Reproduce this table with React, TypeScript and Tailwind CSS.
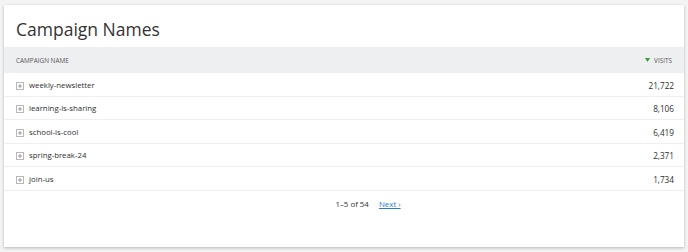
const rows = [
  { name: 'weekly-newsletter', visits: '21,722' },
  { name: 'learning-is-sharing', visits: '8,106' },
  { name: 'school-is-cool', visits: '6,419' },
  { name: 'spring-break-24', visits: '2,371' },
  { name: 'join-us', visits: '1,734' },
];

function ExpandIcon() {
  return (
    <svg width="8" height="8" viewBox="0 0 8 8" className="shrink-0">
      <rect x="0.5" y="0.5" width="7" height="7" fill="white" stroke="#b8b8b8" />
      <path d="M2 4h4M4 2v4" stroke="#9a9a9a" />
    </svg>
  );
}

export default function App() {
  return (
    <div className="w-[688px] h-[252px] bg-[#f4f4f4] pt-[5px] px-[4px] font-['Open_Sans',sans-serif]">
      <div className="bg-white h-[242px] shadow-[0_1px_3px_rgba(0,0,0,0.25)] flex flex-col">
        <h2 className="h-[42px] pl-[12px] pt-[13px] text-[17.5px] leading-[22px] text-[#333]">Campaign Names</h2>
        <div className="h-[26px] pt-[1px] bg-[#eeeff1] flex items-center justify-between pl-[12px] pr-[12px] text-[6.4px] text-[#555] uppercase">
          <span>Campaign Name</span>
          <span className="flex items-center gap-[4px]">
            <svg width="5" height="4" viewBox="0 0 5 4">
              <path d="M0 0h5L2.5 4z" fill="#3c9a3c" />
            </svg>
            Visits
          </span>
        </div>
        <div>
          {rows.map((r) => (
            <div
              key={r.name}
              className="h-[23.5px] pt-[3px] border-b border-[#efefef] flex items-center justify-between pl-[12px] pr-[10px] text-[7.8px] text-[#2e2e2e]"
            >
              <span className="flex items-center gap-[5px]">
                <ExpandIcon />
                {r.name}
              </span>
              <span className="text-[8.2px]">{r.visits}</span>
            </div>
          ))}
        </div>
        <div className="flex justify-center items-center pt-[8px] text-[7.9px] text-[#333]">
          {/* prev link slot, hidden on the first page */}
          <span className="w-[37px]" />
          <span className="ml-[11px]">1–5 of 54</span>
          <a className="ml-[10px] text-[#2b7bd0] underline">Next ›</a>
        </div>
      </div>
    </div>
  );
}
